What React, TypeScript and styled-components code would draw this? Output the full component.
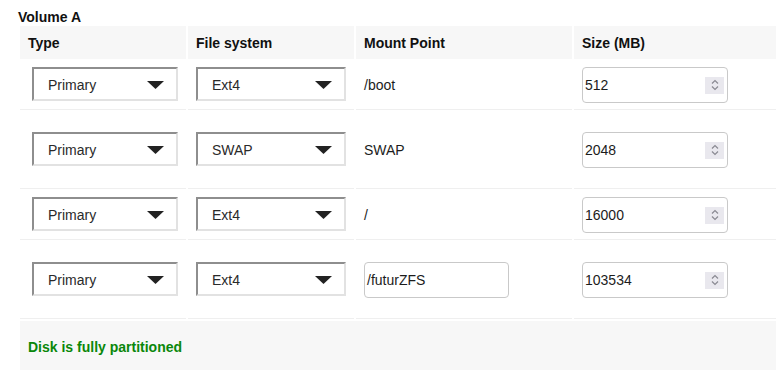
import React from "react";
import styled, { createGlobalStyle } from "styled-components";

const Global = createGlobalStyle`
  html, body { margin: 0; padding: 0; background: #ffffff; }
  body { font-family: "Liberation Sans", Arial, sans-serif; color: #1c1c1c; }
  * { box-sizing: border-box; }
`;

const Page = styled.div`
  width: 776px;
  height: 372px;
  padding: 8px 0 0 18px;
  overflow: hidden;
`;

const Title = styled.div`
  font-weight: 700;
  font-size: 14px;
  line-height: 18px;
  color: #111;
`;

const Table = styled.div`
  margin-left: 2px;
  display: grid;
  grid-template-columns: 166px 166px 216px 202px;
  column-gap: 2px;
`;

const HeadCell = styled.div`
  background: #f7f7f7;
  height: 33px;
  display: flex;
  align-items: center;
  padding: 1px 0 0 8px;
  font-weight: 700;
  font-size: 14px;
  color: #111;
`;

const Cell = styled.div<{ $tall?: boolean; $first?: boolean }>`
  height: ${(p) => (p.$tall ? 79 : 51)}px;
  padding: ${(p) => (p.$tall ? 22 : 8)}px 8px 0 ${(p) => (p.$first ? 12 : 8)}px;
  border-bottom: 1px solid #efefef;
  display: flex;
  align-items: flex-start;
`;

const Select = styled.div`
  width: 100%;
  height: 34px;
  border-style: solid;
  border-width: 2px;
  border-color: #8e8e8e #e2e2e2 #e2e2e2 #8e8e8e;
  background: #fff;
  display: flex;
  align-items: center;
  justify-content: space-between;
  padding: 1px 12px 0 14px;
  font-size: 14px;
  color: #2a2a2a;
`;

const Plain = styled.div`
  height: 36px;
  display: flex;
  align-items: center;
  font-size: 14px;
  color: #1c1c1c;
`;

const InputBox = styled.div<{ $w: number }>`
  width: ${(p) => p.$w}px;
  height: 36px;
  border: 1px solid #c9c9c9;
  border-radius: 4px;
  background: #fff;
  display: flex;
  align-items: center;
  justify-content: space-between;
  padding: 0 3px 0 2px;
  font-size: 14px;
  color: #1c1c1c;
`;

const Spinner = styled.div`
  width: 19px;
  height: 17px;
  background: #e9e8ee;
  display: flex;
  align-items: center;
  justify-content: center;
`;

const Footer = styled.div`
  margin: 2px 0 0 2px;
  width: 756px;
  height: 49px;
  background: #f7f7f7;
  display: flex;
  align-items: center;
  padding: 2px 0 0 8px;
  font-weight: 700;
  font-size: 14px;
  color: #0a870a;
`;

const Arrow = () => (
  <svg width="17" height="8" viewBox="0 0 17 8">
    <path d="M0 0 H17 L8.5 8 Z" fill="#222" />
  </svg>
);

const Spin = () => (
  <Spinner>
    <svg width="10" height="14" viewBox="0 0 10 14">
      <path d="M2 5.5 L5 2.5 L8 5.5" fill="none" stroke="#8a8a92" strokeWidth="1.2" />
      <path d="M2 8.5 L5 11.5 L8 8.5" fill="none" stroke="#8a8a92" strokeWidth="1.2" />
    </svg>
  </Spinner>
);

type Row = { type: string; fs: string; mount: string; mountInput?: boolean; size: string; tall?: boolean };

const rows: Row[] = [
  { type: "Primary", fs: "Ext4", mount: "/boot", size: "512" },
  { type: "Primary", fs: "SWAP", mount: "SWAP", size: "2048", tall: true },
  { type: "Primary", fs: "Ext4", mount: "/", size: "16000" },
  { type: "Primary", fs: "Ext4", mount: "/futurZFS", mountInput: true, size: "103534", tall: true },
];

export default function App() {
  return (
    <Page>
      <Global />
      <Title>Volume A</Title>
      <Table>
        <HeadCell>Type</HeadCell>
        <HeadCell>File system</HeadCell>
        <HeadCell>Mount Point</HeadCell>
        <HeadCell>Size (MB)</HeadCell>
        {rows.map((r, i) => (
          <React.Fragment key={i}>
            <Cell $tall={r.tall} $first>
              <Select>
                <span>{r.type}</span>
                <Arrow />
              </Select>
            </Cell>
            <Cell $tall={r.tall}>
              <Select>
                <span>{r.fs}</span>
                <Arrow />
              </Select>
            </Cell>
            <Cell $tall={r.tall}>
              {r.mountInput ? (
                <InputBox $w={145}>
                  <span>{r.mount}</span>
                </InputBox>
              ) : (
                <Plain>{r.mount}</Plain>
              )}
            </Cell>
            <Cell $tall={r.tall}>
              <InputBox $w={146}>
                <span>{r.size}</span>
                <Spin />
              </InputBox>
            </Cell>
          </React.Fragment>
        ))}
      </Table>
      <Footer>Disk is fully partitioned</Footer>
    </Page>
  );
}
